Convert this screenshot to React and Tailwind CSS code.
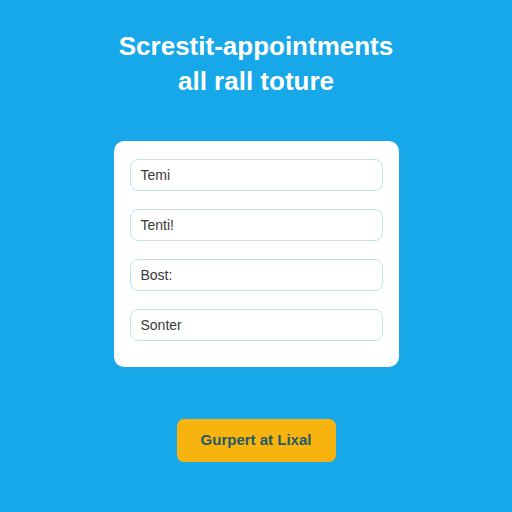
export default function App() {
  const fields = ['Temi', 'Tenti!', 'Bost:', 'Sonter'];

  return (
    <div className="w-[512px] h-[512px] bg-[#17a8ea] flex flex-col items-center font-['Liberation_Sans',Arial,sans-serif]">
      {/* heading */}
      <h1 className="mt-[29px] text-center text-white font-bold text-[26px] leading-[35px]">
        Screstit-appointments
        <br />
        all rall toture
      </h1>

      {/* form card */}
      <div className="mt-[42px] w-[285px] h-[226px] bg-white rounded-[10px] pt-[18px] px-4 flex flex-col gap-[18px]">
        {fields.map((f) => (
          <div
            key={f}
            className="h-[32px] rounded-[8px] border border-[#c3e3ec] flex items-center px-[10px] text-[14px] text-[#3a3a3a]"
          >
            {f}
          </div>
        ))}
      </div>

      {/* action */}
      <button className="mt-[52px] w-[159px] h-[43px] rounded-[7px] bg-[#f8b30f] text-[#235a66] font-bold text-[15px]">
        Gurpert at Lixal
      </button>
    </div>
  );
}
